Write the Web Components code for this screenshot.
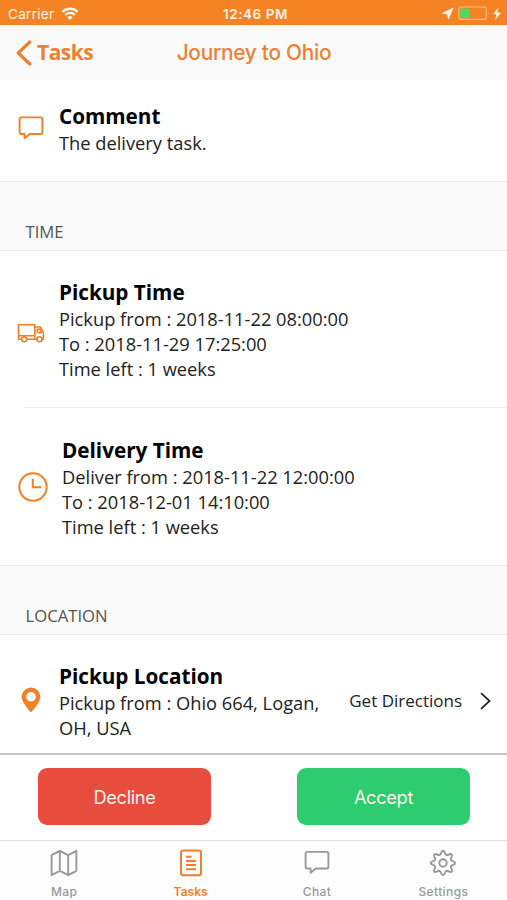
<!DOCTYPE html>
<html lang="en">
<head>
<meta charset="utf-8">
<title>Journey to Ohio</title>
<style>
  body {
    margin: 0;
    background: #fff;
  }
</style>
</head>
<body>
<task-screen>
  <status-bar></status-bar>
  <nav-header back="Tasks">Journey to Ohio</nav-header>

  <task-row icon="comment" label="Comment" style="--row-height: 101px; --row-top: 23px; --icon-shift: -6px">
    <div>The delivery task.</div>
  </task-row>

  <section-title>TIME</section-title>
  <task-row icon="truck" label="Pickup Time" style="--row-height: 156px; --icon-shift: 8px">
    <div>Pickup from : 2018-11-22 08:00:00</div>
    <div>To : 2018-11-29 17:25:00</div>
    <div>Time left : 1 weeks</div>
  </task-row>
  <task-row icon="clock" label="Delivery Time" inset style="--row-height: 158px; --row-top: 30px; --text-left: 62px; --icon-width: 65px; --icon-shift: 1px">
    <div>Deliver from : 2018-11-22 12:00:00</div>
    <div>To : 2018-12-01 14:10:00</div>
    <div>Time left : 1 weeks</div>
  </task-row>

  <section-title>LOCATION</section-title>
  <task-row icon="pin" label="Pickup Location" style="--row-height: 118px; --row-top: 27.5px; --icon-shift: 12px">
    <div>Pickup from : Ohio 664, Logan,</div>
    <div>OH, USA</div>
    <directions-link slot="action">Get Directions</directions-link>
  </task-row>

  <action-bar slot="footer">
    <action-button style="--fill: #e74c3c">Decline</action-button>
    <action-button style="--fill: #2ecc71">Accept</action-button>
  </action-bar>
  <tab-bar slot="footer">
    <tab-item icon="map">Map</tab-item>
    <tab-item icon="tasks" active>Tasks</tab-item>
    <tab-item icon="chat">Chat</tab-item>
    <tab-item icon="gear">Settings</tab-item>
  </tab-bar>
</task-screen>

<script>
const ICONS = {
  comment: `<svg width="26" height="26" viewBox="0 0 26 26" fill="none" stroke="currentColor" stroke-width="1.9" stroke-linejoin="round">
    <path d="M3.4 2.4h19.2q1.8 0 1.8 1.8v13q0 1.8-1.8 1.8H11.8L6.6 23.2V19H3.4q-1.8 0-1.8-1.8v-13q0-1.8 1.8-1.8z"/></svg>`,
  truck: `<svg width="28" height="20" viewBox="0 0 28 20" fill="none" stroke="currentColor" stroke-width="1.6" stroke-linejoin="round">
    <path d="M4.5 16.3H1.5V1.8h16.3v14.5h-8M1.5 12.8h16.3M17.8 4h5.6l3 5.6v6.7h-1.4M20 16.3h-2.2M20.3 6.2h2.3l1.9 3.6h-4.2z"/>
    <circle cx="7.2" cy="16.2" r="2.5"/><circle cx="22.5" cy="16.2" r="2.5"/></svg>`,
  clock: `<svg width="30" height="30" viewBox="0 0 30 30" fill="none" stroke="currentColor" stroke-width="2">
    <circle cx="15" cy="15" r="13.7"/><path d="M14.8 6.7v8.6h8.4"/></svg>`,
  pin: `<svg width="20" height="26" viewBox="0 0 20 26" fill="currentColor" fill-rule="evenodd">
    <path d="M10 .4a9.4 9.4 0 0 0-9.4 9.4c0 6 9.4 15.6 9.4 15.6s9.4-9.6 9.4-15.6A9.4 9.4 0 0 0 10 .4zm0 4.6a4.8 4.8 0 1 1 0 9.6A4.8 4.8 0 0 1 10 5z"/></svg>`,
  map: `<svg width="28" height="28" viewBox="0 0 28 28" fill="none" stroke="currentColor" stroke-width="1.9" stroke-linejoin="round">
    <path d="M1.6 6.2l8.2-4.4 8.4 4.4 8.2-4.4v20l-8.2 4.4-8.4-4.4-8.2 4.4zM9.8 1.8v20M18.2 6.2v20"/></svg>`,
  tasks: `<svg width="28" height="28" viewBox="0 0 28 28" fill="none" stroke="currentColor" stroke-width="2">
    <rect x="4" y="1.5" width="20" height="24.8" rx="2.4"/><path d="M9 7.8h5.6M9 11.9h10M9 16.1h10M9 20.3h10"/></svg>`,
  chat: `<svg width="28" height="28" viewBox="0 0 28 28" fill="none" stroke="currentColor" stroke-width="1.9" stroke-linejoin="round">
    <path d="M4.4 2.9h19.2q1.8 0 1.8 1.8v13q0 1.8-1.8 1.8H12.8l-5.2 4.2v-4.2H4.4q-1.8 0-1.8-1.8v-13q0-1.8 1.8-1.8z"/></svg>`,
  gear: `<svg width="28" height="28" viewBox="0 0 28 28" fill="none" stroke="currentColor" stroke-width="1.9" stroke-linejoin="round">
    <path d="M11.4 5.6C12.3 4.8 12 1.8 14 1.8s1.7 3 2.6 3.8q.8.6 1.6.7c1.2 0 3.1-2.3 4.5-.9s-.9 3.3-.9 4.5q.1.8.6 1.5c.8.9 3.8.6 3.8 2.6s-3 1.7-3.8 2.6q-.5.7-.6 1.5c0 1.2 2.3 3.1.9 4.5s-3.3-.9-4.5-.9q-.8.1-1.6.7c-.9.8-.6 3.8-2.6 3.8s-1.7-3-2.6-3.8q-.8-.6-1.6-.7c-1.2 0-3.1 2.3-4.5.9s.9-3.3.9-4.5q-.1-.8-.6-1.5c-.8-.9-3.8-.6-3.8-2.6s3-1.7 3.8-2.6q.5-.7.6-1.5c0-1.2-2.3-3.1-.9-4.5s3.3.9 4.5.9q.8-.1 1.6-.7z"/>
    <circle cx="14" cy="14" r="3.7"/></svg>`
};

class BaseElement extends HTMLElement {
  constructor() {
    super();
    this.attachShadow({mode: 'open'});
    this.shadowRoot.innerHTML = `<style>${this.constructor.styles}</style>${this.render()}`;
  }
}

class TaskScreen extends BaseElement {
  static get styles() {
    return `
      :host {
        display: flex;
        flex-direction: column;
        height: 900px;
        overflow: hidden;
        --orange: #f58023;
        font-family: "Open Sans", "Noto Sans", sans-serif;
        color: #222;
      }
      main { flex: 1; min-height: 0; overflow: hidden; }
    `;
  }
  render() {
    return `<main><slot></slot></main><slot name="footer"></slot>`;
  }
}

class StatusBar extends BaseElement {
  static get styles() {
    return `
      :host {
        display: grid;
        grid-template-columns: 1fr auto 1fr;
        align-items: center;
        height: 25px;
        padding: 2px 4px 0 8px;
        box-sizing: border-box;
        background: #f58324;
        color: #fff3e6;
        font: 13.5px/20px Inter, sans-serif;
      }
      div { display: flex; align-items: center; }
      .left { gap: 7px; letter-spacing: 0.3px; }
      .time { font-weight: 600; font-size: 13.5px; letter-spacing: 0.55px; }
      .right { justify-content: flex-end; gap: 3px; }
    `;
  }
  render() {
    return `
      <div class="left">
        <span>Carrier</span>
        <svg width="18" height="14" viewBox="0 0 18 14" fill="none" stroke="currentColor" stroke-width="2.3">
          <path d="M1.3 4.9a11 11 0 0 1 15.4 0M4.1 7.9a7 7 0 0 1 9.8 0"/>
          <path d="M9 13l-2.7-2.8a3.9 3.9 0 0 1 5.4 0z" fill="currentColor" stroke="none"/>
        </svg>
      </div>
      <div class="time">12:46 PM</div>
      <div class="right">
        <svg width="13" height="13" viewBox="0 0 13 13" fill="currentColor"><path d="M12.8.4L7.4 12.8 6 7.6.4 6.2z"/></svg>
        <svg width="46" height="15" viewBox="2 0 46 15">
          <rect x="3.8" y="1" width="27.5" height="12.4" rx="2.5" fill="none" stroke="#fbbd88" stroke-width="1.1"/>
          <path d="M32.8 5.2q1.8 2 0 4z" fill="#fbbd88"/>
          <rect x="5.3" y="2.6" width="9" height="9.3" rx="1" fill="#4cd964"/>
          <path d="M43.6 1.3L38 8.3h3.4L40.2 14l5.8-7.6h-3.7z" fill="currentColor"/>
        </svg>
      </div>
    `;
  }
}

class NavHeader extends BaseElement {
  static get styles() {
    return `
      :host {
        display: grid;
        grid-template-columns: 1fr auto 1fr;
        align-items: center;
        height: 55px;
        padding: 0 16px;
        background: #fafafa;
        color: #ee8030;
      }
      .back {
        display: flex;
        align-items: center;
        gap: 5px;
        font-size: 21px;
        font-weight: 700;
        letter-spacing: -0.5px;
      }
      .back span { margin-top: -2px; }
      .title {
        margin-top: -1px;
        padding-left: 1px;
        font: 500 20.8px Inter, sans-serif;
        letter-spacing: -0.25px;
      }
    `;
  }
  render() {
    return `
      <div class="back">
        <svg width="16" height="26" viewBox="0 0 16 26" fill="none" stroke="currentColor" stroke-width="3.2" stroke-linecap="round" stroke-linejoin="round"><path d="M13.8 2L2.2 13l11.6 11"/></svg>
        <span>${this.getAttribute('back')}</span>
      </div>
      <div class="title"><slot></slot></div>
    `;
  }
}

class SectionTitle extends BaseElement {
  static get styles() {
    return `
      :host {
        display: flex;
        align-items: flex-end;
        height: 70px;
        box-sizing: border-box;
        padding: 0 25.5px 7px;
        border: solid #e9e9e9;
        border-width: 1px 0;
        background: #fafafa;
        color: #555;
        font-size: 16.7px;
      }
    `;
  }
  render() {
    return `<slot></slot>`;
  }
}

class TaskRow extends BaseElement {
  static get styles() {
    return `
      :host {
        display: flex;
        height: var(--row-height);
        box-sizing: border-box;
      }
      :host([inset]) {
        background: linear-gradient(#ececec, #ececec) 25px 0 / 100% 1px no-repeat;
      }
      .icon {
        display: flex;
        align-items: center;
        justify-content: center;
        width: var(--icon-width, 62px);
        flex: none;
        box-sizing: border-box;
        margin-right: calc(var(--text-left, 59px) - var(--icon-width, 62px));
        color: var(--orange);
      }
      .icon svg {
        display: block;
        margin-top: var(--icon-shift, 0);
      }
      .text {
        flex: 1;
        padding-top: var(--row-top, 28px);
        font-size: 18.3px;
        line-height: 25px;
        white-space: nowrap;
      }
      h3 {
        margin: 0;
        color: #000;
        font-size: 20.7px;
        line-height: 27px;
      }
      .action { display: flex; align-items: center; }
    `;
  }
  render() {
    return `
      <div class="icon">${ICONS[this.getAttribute('icon')]}</div>
      <div class="text">
        <h3>${this.getAttribute('label')}</h3>
        <slot></slot>
      </div>
      <div class="action"><slot name="action"></slot></div>
    `;
  }
}

class DirectionsLink extends BaseElement {
  static get styles() {
    return `
      :host {
        display: flex;
        align-items: center;
        gap: 17px;
        padding: 13px 15px 0 0;
        font-size: 17px;
        white-space: nowrap;
      }
    `;
  }
  render() {
    return `
      <slot></slot>
      <svg width="13" height="18" viewBox="0 0 13 18" fill="none" stroke="currentColor" stroke-width="1.7"><path d="M2 1.2L10.6 9 2 16.8"/></svg>
    `;
  }
}

class ActionBar extends BaseElement {
  static get styles() {
    return `
      :host {
        display: flex;
        justify-content: space-between;
        height: 87px;
        box-sizing: border-box;
        padding: 13px 37px 14px 38px;
        border-top: 2px solid #c4c4c4;
        background: #fff;
      }
    `;
  }
  render() {
    return `<slot></slot>`;
  }
}

class ActionButton extends BaseElement {
  static get styles() {
    return `
      :host { display: flex; }
      button {
        width: 173px;
        height: 57px;
        border: 0;
        border-radius: 9px;
        padding: 0;
        background: var(--fill);
        color: #fdf1ee;
        font: 18.2px Inter, sans-serif;
        letter-spacing: -0.3px;
      }
    `;
  }
  render() {
    return `<button><slot></slot></button>`;
  }
}

class TabBar extends BaseElement {
  static get styles() {
    return `
      :host {
        display: grid;
        grid-template-columns: repeat(4, 126.4px);
        height: 60px;
        box-sizing: border-box;
        padding-left: 1px;
        border-top: 1px solid #dedede;
        background: #fdfdfd;
      }
    `;
  }
  render() {
    return `<slot></slot>`;
  }
}

class TabItem extends BaseElement {
  static get styles() {
    return `
      :host {
        display: flex;
        flex-direction: column;
        align-items: center;
        gap: 6px;
        padding-top: 8px;
        color: #999;
        font: 500 12px/17px Inter, sans-serif;
        letter-spacing: 0.4px;
      }
      :host([active]) {
        color: #ee8030;
        font-weight: 600;
        letter-spacing: 0;
      }
      svg { display: block; }
    `;
  }
  render() {
    return `${ICONS[this.getAttribute('icon')]}<span><slot></slot></span>`;
  }
}

customElements.define('task-screen', TaskScreen);
customElements.define('status-bar', StatusBar);
customElements.define('nav-header', NavHeader);
customElements.define('section-title', SectionTitle);
customElements.define('task-row', TaskRow);
customElements.define('directions-link', DirectionsLink);
customElements.define('action-bar', ActionBar);
customElements.define('action-button', ActionButton);
customElements.define('tab-bar', TabBar);
customElements.define('tab-item', TabItem);
</script>
</body>
</html>
